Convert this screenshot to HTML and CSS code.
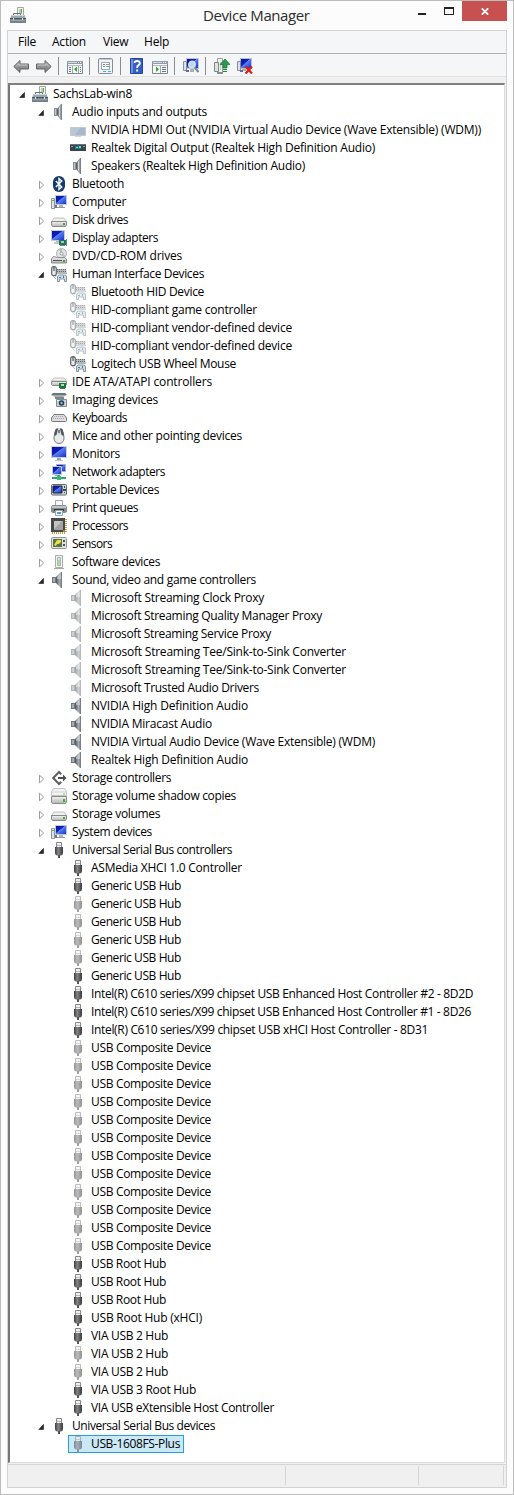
FILE: index.html
```html
<!DOCTYPE html>
<html lang="en">
<head>
<meta charset="utf-8">
<title>Device Manager</title>
<link rel="stylesheet" href="styles.css">
</head>
<body>
<svg class="sprite" aria-hidden="true">
  <defs>
    <linearGradient id="gBlue" x1="0" y1="0" x2="1" y2="1"><stop offset="0" stop-color="#0a1496"/><stop offset=".42" stop-color="#0d1fc4"/><stop offset=".46" stop-color="#5b82ee"/><stop offset="1" stop-color="#1029cf"/></linearGradient>
    <linearGradient id="gCone" x1="0" y1="0" x2="1" y2="0"><stop offset="0" stop-color="#4e5459"/><stop offset=".6" stop-color="#a9afb4"/><stop offset="1" stop-color="#6b7278"/></linearGradient>
    <linearGradient id="gBox" x1="0" y1="0" x2="0" y2="1"><stop offset="0" stop-color="#f4f4f4"/><stop offset="1" stop-color="#b4b4b4"/></linearGradient>
    <linearGradient id="gPlug" x1="0" y1="0" x2="1" y2="0"><stop offset="0" stop-color="#3c3c3e"/><stop offset=".4" stop-color="#85858a"/><stop offset="1" stop-color="#3a3a3c"/></linearGradient>
    <linearGradient id="gArrow" x1="0" y1="0" x2="0" y2="1"><stop offset="0" stop-color="#b4b4b4"/><stop offset="1" stop-color="#757575"/></linearGradient>
  </defs>
  <symbol id="open" viewBox="0 0 8 18"><path d="M5.500 7.500v5H.8z" fill="#2a2a2a" stroke="#2a2a2a" stroke-width=".7"/></symbol>
  <symbol id="closed" viewBox="0 0 8 18"><path d="M1.500 6.200v7.600l4.200-3.800z" fill="#fff" stroke="#9c9c9c"/></symbol>

  <symbol id="toolbox" viewBox="0 0 16 16"><path d="M7.500.5h6v8h-6z" fill="#f3f5f4" stroke="#a1a8a6"/><path d="M9 2h3v5H9z" fill="#b9cfb3"/><path d="M11 2h1v4h-1z" fill="#48b636"/><path d="M3.500 8V6.500h7V8" fill="none" stroke="#66717a"/><path d="M1.500 8h13l1 3H.5z" fill="#9ba7af"/><path d="M2 8h12v1H2z" fill="#cfd6da"/><path d="M0 11h16v5H0z" fill="#77838b"/><path d="M0 11h16v1H0z" fill="#4b565e"/><path d="M1 13h14v1H1z" fill="#98a4aa"/><path d="M3 11h1v2H3zM12 11h1v2h-1z" fill="#dce2e5"/></symbol>
  <symbol id="speaker" viewBox="0 0 16 16"><path d="M1 5h4v6H1z" fill="#72787d"/><path d="M2 6h2v4H2z" fill="#a7adb2"/><path d="M5 5l5-5h1v16h-1l-5-5z" fill="url(#gCone)"/><path d="M6 5l4-4v6H6z" fill="#dfe3e6" opacity=".55"/></symbol>
  <symbol id="speaker2" viewBox="0 0 16 16"><path d="M3 4h3v8H3z" fill="#8b9196"/><path d="M4 5h1v6H4z" fill="#c4c9cd"/><path d="M6 5l4-5h1v16h-1l-4-5z" fill="url(#gCone)"/><path d="M8 4l1-1v10l-1-1z" fill="#d5d9dc"/></symbol>
  <symbol id="screen" viewBox="0 0 16 16"><path d="M.5 5.500h15v8H.5z" fill="#a9b8cb" stroke="#c3c8ce"/><path d="M1 6h9l-5 7H1z" fill="#b9c6d6"/><path d="M5 14h6v1H5z" fill="#d5d8db"/></symbol>
  <symbol id="receiver" viewBox="0 0 16 16"><path d="M0 4h16v7H0z" fill="#3c4449"/><path d="M0 4h16v1H0z" fill="#6a7479"/><path d="M5 6h6v3H5z" fill="#1d7f8b"/><path d="M6 7h2v1H6zM9 6h2v2H9z" fill="#5ce0e4"/><path d="M1 6h2v1H1zM13 6h2v1h-2z" fill="#9ba5a9"/></symbol>
  <symbol id="bluetooth" viewBox="0 0 16 16"><rect x="2" width="12" height="16" rx="6" fill="#123a6c"/><path d="M4.800 5l6 6L8 13.500v-11L10.800 5l-6 6" fill="none" stroke="#fff" stroke-width="1.400"/></symbol>
  <symbol id="computer" viewBox="0 0 16 16"><path d="M4.500 1.500h11v9h-11z" fill="url(#gBlue)" stroke="#c5c8cd"/><path d="M8 11h4v2H8z" fill="#b1b5b8"/><path d="M6 13h8v1H6z" fill="#91979b"/><path d="M.5 4.500h3v10h-3z" fill="#dfe2e6" stroke="#8d949d"/><path d="M1 6h2v1H1z" fill="#53b548"/><path d="M4 11h2v3H4z" fill="#6f7396"/></symbol>
  <symbol id="disk" viewBox="0 0 16 16"><path d="M3 6h10l2.500 3.500H.5z" fill="#f0f0f0" stroke="#b3b3b3" stroke-width=".8"/><path d="M.5 9.500h15V13l-1 1.500h-13L.5 13z" fill="url(#gBox)" stroke="#898989"/><path d="M12 11h2v2h-2z" fill="#34b52c"/></symbol>
  <symbol id="display" viewBox="0 0 16 16"><path d="M.5.5h13v10H.5z" fill="url(#gBlue)" stroke="#c9ccd0"/><path d="M5 11h4v1H5z" fill="#b0b4b7"/><path d="M3 12h6v2H3z" fill="#c4c7c9"/><path d="M8 10h7v5H8z" fill="#16795a"/><path d="M10 11h3v2h-3z" fill="#b7c4bd"/><path d="M9 15h5v1H9zM15 9h1v7h-1z" fill="#7b8682"/></symbol>
  <symbol id="dvd" viewBox="0 0 16 16"><circle cx="10.500" cy="5.500" r="5" fill="#e2e4e5" stroke="#acafb1"/><path d="M10.500 5.500L8 1.500q2-1 3 0z" fill="#9bc79b"/><path d="M10.500 5.500l4 2-2 2.500z" fill="#c9b7cf"/><circle cx="10.500" cy="5.500" r="1.500" fill="#fff" stroke="#999"/><path d="M2.500 8.500L.5 11v4h15v-4l-2-1.500h-7z" fill="url(#gBox)" stroke="#8b8b8b"/><path d="M2 12h9v1H2z" fill="#555"/><path d="M12 12h2v2h-2z" fill="#33aa31"/></symbol>
  <symbol id="hid" viewBox="0 0 16 16"><rect x=".7" y=".7" width="4.600" height="9" rx="2" fill="#eceeef" stroke="#5d6469" stroke-width="1.200"/><path d="M2.500 1h1v4h-1z" fill="#31383c"/><path d="M2 10l3 3" stroke="#b4b8ba"/><path d="M6 3h9l1 5H6z" fill="#b2b7ba"/><path d="M6 3.500h9M6 5.500h10" stroke="#60676c" stroke-dasharray="1 1"/><path d="M6.500 15.500V11q0-2 2-2h5q2 0 2 2v4.500h-2V13h-5v2.500z" fill="#cfe0e7" stroke="#707c83" stroke-width=".8"/><path d="M8 11h2v1H8zM12 10h1v2h-1z" fill="#397ca8"/></symbol>
  <symbol id="ide" viewBox="0 0 16 16"><path d="M3 4h10l2.500 3H.5z" fill="#f0f0f0" stroke="#b3b3b3" stroke-width=".8"/><path d="M.5 7.500h15v3l-1 1h-13l-1-1z" fill="url(#gBox)" stroke="#898989"/><path d="M8 9h7v5H8z" fill="#167a3b"/><path d="M10 10h3v2h-3z" fill="#bad3b9"/><path d="M9 14h5v1H9z" fill="#54695a"/></symbol>
  <symbol id="imaging" viewBox="0 0 16 16"><path d="M2 1h12l2 2H0z" fill="#69757b"/><path d="M0 3h16l-4 2H4z" fill="#a3adb1"/><path d="M4 5h9v2H4z" fill="#7b868d"/><path d="M5.500 7.500h10v7h-10z" fill="#cfd3d6" stroke="#828b91"/><circle cx="10.500" cy="11" r="2.800" fill="#263d57"/><circle cx="10.500" cy="11" r="1.200" fill="#82bed8"/><path d="M6 8h2v1H6z" fill="#fff"/></symbol>
  <symbol id="keyboard" viewBox="0 0 16 16"><path d="M3 4.500h10l2.500 3.500v2.500q0 1-1 1h-13q-1 0-1-1V8z" fill="#dedee2" stroke="#77777d"/><path d="M3 6.500h10M2 8.500h12" stroke="#a2a2a9" stroke-dasharray="1 1"/></symbol>
  <symbol id="mouse" viewBox="0 0 16 16"><path d="M5 1Q3 6 3 10q0 5 5 5.500 5-.5 5-5.500 0-4-2-9-3-1-6 0z" fill="#e8eaeb" stroke="#727a80"/><path d="M5 1q-2 4-1.500 7l2-1L7 1zM11 1q2 4 1.500 7l-2-1L9 1z" fill="#4d565d"/><path d="M7 0h2v7H7z" fill="#d3d7d9"/><path d="M7.500 2h1v3h-1z" fill="#242b30"/></symbol>
  <symbol id="monitor" viewBox="0 0 16 16"><path d="M.5.5h15v11H.5z" fill="url(#gBlue)" stroke="#cfd1d3"/><path d="M6 12h4v2H6z" fill="#9fa4a8"/><path d="M4 14h8v1H4z" fill="#bdc1c4"/></symbol>
  <symbol id="network" viewBox="0 0 16 16"><path d="M5.500.5h9v7h-9z" fill="url(#gBlue)" stroke="#a6afbd"/><path d="M1.500 2.500h9v8h-9z" fill="url(#gBlue)" stroke="#c3c8cf"/><path d="M4 11h5v1H4z" fill="#9ba1a8"/><path d="M7 11h2v2H7zM1 13h14v2H1z" fill="#31a66a"/><path d="M6 12h4v4H6z" fill="#35bb79"/></symbol>
  <symbol id="portable" viewBox="0 0 16 16"><rect x=".5" y="2.500" width="15" height="10.500" rx="1" fill="#d3d6d9" stroke="#62686e"/><path d="M2 4h9v7H2z" fill="url(#gBlue)" stroke="#1b2229"/><path d="M13 4h1v2h-1zM12 7h3v2h-3zM13 10h1v1h-1z" fill="#414950"/></symbol>
  <symbol id="printer" viewBox="0 0 16 16"><path d="M4.500.5h7v6h-7z" fill="#f6f7f8" stroke="#a3a9ad"/><path d="M1.500 5h13L16 7v5l-2 1H2l-2-1V7z" fill="#858c91"/><path d="M1 6h14v2H1z" fill="#c0c5c8"/><path d="M3 9h10v2H3z" fill="#343b40"/><path d="M4.500 10.500h7v5h-7z" fill="#fff" stroke="#9ba4ac"/><path d="M6 12h4v2H6z" fill="#4a9bd1"/></symbol>
  <symbol id="cpu" viewBox="0 0 16 16"><path d="M1 15h13M15 1v13" stroke="#c19a4c" stroke-width="2" stroke-dasharray="1 1"/><path d="M0 0h14v14H0z" fill="#484848"/><path d="M3 3h9v9H3z" fill="#a2a2a2"/><path d="M3 3h8l-8 8z" fill="#c5c5c5"/><path d="M12 12h2v2h-2z" fill="#a67f3c"/></symbol>
  <symbol id="sensor" viewBox="0 0 16 16"><rect x=".5" y="1.500" width="15" height="11" rx="1" fill="#dfe1e1" stroke="#92979a"/><path d="M2 3h9v8H2z" fill="#5d7149"/><path d="M3 9l3-5h4v2L8 8H6l-1 2z" fill="#e8e23f"/><path d="M12 4h2v2h-2zM12 8h2v2h-2z" fill="#4c555b"/></symbol>
  <symbol id="software" viewBox="0 0 16 16"><path d="M4.500 1.500h7v12h-7z" fill="#f4f5f4" stroke="#a9adab"/><path d="M6.500 3.500h3v8h-3z" fill="#dfe8dc" stroke="#acb5a9"/><path d="M7.500 6h1v5h-1z" fill="#82c777"/><path d="M3 14h10v1H3z" fill="#a4a9a7"/></symbol>
  <symbol id="storage" viewBox="0 0 16 16"><path d="M8 .5L.800 8 8 15.500l3-3L9.500 11 8 12.500 3.700 8 8 3.500 9.500 5 11 3.500z" fill="#5f5f5f"/><path d="M7 7h5V4.500L15.500 8 12 11.500V9H7z" fill="#4e4e4e"/></symbol>
  <symbol id="shadow" viewBox="0 0 16 16"><path d="M2.500.5h11l2 3v4H.5v-4z" fill="#f2f2f2" stroke="#c3c3c3"/><path d="M1 4h14" stroke="#d5d5d5"/><path d="M12 5h2v2h-2z" fill="#b9d8b5"/><path d="M.5 8.500h15V14l-1 1.500h-13L.5 14z" fill="url(#gBox)" stroke="#8b8b8b"/><path d="M12 11h2v3h-2z" fill="#34b52c"/></symbol>
  <symbol id="usb" viewBox="0 0 16 16"><path d="M5.500.5h5v5h-5z" fill="#f0f0f2" stroke="#85858a"/><path d="M6 3h4v1H6z" fill="#b5b5ba"/><path d="M4 5h8v6q0 2-2 2.500H6Q4 13 4 11z" fill="url(#gPlug)"/><path d="M7 13h2v3H7z" fill="#555558"/></symbol>

  <symbol id="back" viewBox="0 0 16 16"><path d="M.800 8.500L7 2.500V6h8.500v5H7v3.500z" fill="url(#gArrow)" stroke="#646464"/><path d="M3 8.500l3-3V7h8.500" fill="none" stroke="#d4d4d4" stroke-width=".8"/></symbol>
  <symbol id="panel" viewBox="0 0 16 16"><path d="M.5 3.500h15v12H.5z" fill="#f5f6f7" stroke="#7f8790"/><path d="M0 3h16v3H0z" fill="#929cab"/><path d="M1 4h9v1H1z" fill="#d6dce5"/><path d="M11 4h1v1h-1zM13 4h1v1h-1z" fill="#fff"/><path d="M1 7.500h14" stroke="#b5bac1"/></symbol>
  <symbol id="tree-panel" viewBox="0 0 16 16"><use href="#panel"/><path d="M5.500 8v7M11.500 8v7" stroke="#a0a5ab"/><path d="M2 9.500h2M2 11.500h2M2 13.500h2M13 9.500h1M13 11.500h1M13 13.500h1" stroke="#65758b"/><path d="M10 8.500v5.500L7 11.200z" fill="#35a629"/></symbol>
  <symbol id="action-panel" viewBox="0 0 16 16"><use href="#panel"/><path d="M8.500 8v7" stroke="#a0a5ab"/><path d="M10 9.500h4M10 11.500h4M10 13.500h4" stroke="#65758b"/><path d="M4 8.500v5.500l3-2.800z" fill="#35a629"/></symbol>
  <symbol id="properties" viewBox="0 0 16 16"><rect x=".5" y=".5" width="14" height="15" rx="1" fill="#f3f4f5" stroke="#878d93"/><path d="M1 1h13v1H1z" fill="#c5cbd1"/><path d="M3.500 4.500h8v7h-8z" fill="#fff" stroke="#9ba4b0"/><path d="M5 6h2v1H5zM5 8h2v1H5z" fill="#449bd2"/><path d="M8 6h3v1H8zM8 8h3v1H8z" fill="#8d99a8"/><path d="M5 13h3v1H5zM10 13h3v1h-3z" fill="#36b4d9"/></symbol>
  <symbol id="help" viewBox="0 0 16 16"><path d="M1.500.5h12v15h-12z" fill="#365dc4" stroke="#2345a2"/><path d="M2 1h2v14H2z" fill="#6f91df"/><path d="M5.500 5q0-2 2.500-2 2.800 0 2.800 2.200 0 1.400-1.500 2.200-1.200.7-1.200 2.600M8.100 11.500v2" fill="none" stroke="#fff" stroke-width="1.800"/></symbol>
  <symbol id="scan" viewBox="0 0 16 16"><path d="M3.500.5h12v10h-12z" fill="url(#gBlue)" stroke="#c4c8ce"/><path d="M7 11h4v3H7z" fill="#a9afb4"/><path d="M.5 3.500h3v9h-3z" fill="#dde0e4" stroke="#858d97"/><path d="M3 12h3v2H3z" fill="#656995"/><circle cx="9" cy="6.500" r="3.300" fill="#bdd9ef" stroke="#dfe4e7" stroke-width="1.200"/><path d="M11.500 9.500l4 4.500" stroke="#82888c" stroke-width="2"/></symbol>
  <symbol id="update" viewBox="0 0 16 16"><path d="M3.500.5h5v14h-5z" fill="#f0f1f0" stroke="#989e9a"/><path d="M.5 4.500h4v9h-4z" fill="#dfe4df" stroke="#7e8781"/><path d="M3 14h6v2H3z" fill="#80918b"/><path d="M6.500 4v8" stroke="#c1cdbf"/><path d="M11 1l5 5.500h-3V10H9V6.500H6z" fill="#2c9b51" stroke="#176d38" stroke-width=".7"/><path d="M9 11h4v1H9zM9 13h4v1H9z" fill="#218b44"/></symbol>
  <symbol id="remove" viewBox="0 0 16 16"><path d="M3.500.5h11v10h-11z" fill="url(#gBlue)" stroke="#b9bec6"/><path d="M5 11h4v2H5z" fill="#a9afb4"/><path d="M.5 3.500h3v9h-3z" fill="#dde0e4" stroke="#858d97"/><path d="M3 12h3v2H3z" fill="#656995"/><path d="M8.500 8.500l6.500 7M15 8.500l-6.500 7" stroke="#df1b14" stroke-width="2.200"/></symbol>
</svg>

<div class="window">
  <header class="titlebar">
    <svg class="icon"><use href="#toolbox"/></svg>
    <h1 class="title">Device Manager</h1>
    <div class="controls">
      <span class="minimize"></span>
      <span class="maximize"></span>
      <span class="close"><svg viewBox="0 0 8 7"><path d="M.8.300l6.400 6.400M7.200.300L.8 6.700" stroke="#fff" stroke-width="1.700"/></svg></span>
    </div>
  </header>
  <main class="client">
    <nav class="menu"><span class="m-file">File</span><span class="m-action">Action</span><span class="m-view">View</span><span class="m-help">Help</span></nav>
    <div class="toolbar">
      <svg class="icon"><use href="#back"/></svg>
      <svg class="icon next flip"><use href="#back"/></svg>
      <i class="sep"></i>
      <svg class="icon"><use href="#tree-panel"/></svg>
      <i class="sep"></i>
      <svg class="icon"><use href="#properties"/></svg>
      <i class="sep"></i>
      <svg class="icon"><use href="#help"/></svg>
      <svg class="icon next"><use href="#action-panel"/></svg>
      <i class="sep"></i>
      <svg class="icon"><use href="#scan"/></svg>
      <i class="sep"></i>
      <svg class="icon"><use href="#update"/></svg>
      <svg class="icon next"><use href="#remove"/></svg>
    </div>
    <ul class="tree" id="tree"></ul>
    <footer class="status"><span class="pane wide"></span><span class="pane mid"></span><span class="pane end"></span></footer>
  </main>
</div>
<script src="tree.js"></script>
</body>
</html>
```
FILE: styles.css
```css
* { box-sizing: border-box; }
body { margin: 0; font: 12px/18px "Open Sans", "Noto Sans", sans-serif; letter-spacing: -.22px; color: #000; }
.sprite { position: absolute; width: 0; height: 0; }
.window { width: 514px; height: 1495px; padding: 0 6px 6px; background: #fcfcfc; border: 1px solid #bdbdbd; display: flex; flex-direction: column; }
.icon { width: 16px; height: 16px; flex: none; display: block; }

.titlebar { height: 29px; display: flex; align-items: flex-start; padding-left: 3px; }
.titlebar .icon { margin-top: 6px; }
.title { margin: 3px 0 0; flex: 1; padding-left: 177px; font-size: 15px; line-height: 22px; font-weight: 400; letter-spacing: -.4px; color: #2c2c2c; white-space: nowrap; }
.controls { display: flex; height: 20px; }
.minimize { width: 8px; height: 2px; margin: 12px 18px 0 0; background: #222; }
.maximize { width: 10px; height: 8px; margin: 6px 8px 0 0; border: 1px solid #222; border-top-width: 2px; }
.close { width: 45px; height: 20px; background: #c75050; display: grid; place-items: center; }
.close svg { width: 8px; height: 7px; }

.client { flex: 1; display: flex; flex-direction: column; border: 1px solid #d2d2d2; background: #f0f0f0; }
.menu { height: 23px; flex: none; display: flex; padding-left: 10px; line-height: 22px; background: #f5f6f7; border-bottom: 1px solid #aeb1b4; }
.m-file { width: 34px; }
.m-action { width: 51px; }
.m-view { width: 41px; }
.toolbar { height: 23px; flex: none; display: flex; align-items: flex-start; padding: 4px 0 0 5px; background: #f5f6f7; border-bottom: 1px solid #e3e3e3; }
.next { margin-left: 7px; }
.flip { transform: scaleX(-1); }
.sep { width: 1px; height: 18px; margin: -1px 8px 0 6px; background: #8d8d8d; }

.tree { flex: 1; margin: 6px 1px 1px 0; padding: 0; list-style: none; background: #fff; border: 1px solid #dcdcdc; border-top: 2px solid #808080; border-left: 2px solid #777; }
.row { display: flex; height: 18px; }
.level-0 { padding-left: 9px; }
.level-1 { padding-left: 28px; }
.level-2 { padding-left: 47px; }
.arrow { width: 8px; height: 18px; margin-right: 3px; flex: none; }
.item { display: flex; align-items: center; gap: 5px; height: 18px; padding: 0 3px 0 1px; border: 1px solid transparent; white-space: nowrap; line-height: 16px; }
.selected { background: #cbe8f6; border-color: #26a0da; }
.faded .icon { opacity: .55; }

.status { height: 23px; flex: none; display: flex; padding: 1px 2px 2px 0; border-top: 1px solid #d5d5d5; }
.pane { border-right: 1px solid #d5d5d5; }
.wide { width: 278px; }
.mid { width: 133px; }
.end { flex: 1; }
```
FILE: tree.js
```js
// Each entry: [level, icon, label, label width in px, state].
// State is open, closed, faded or selected.
const rows = [
  [0, "toolbox", "SachsLab-win8", 79, "open"],
  [1, "speaker2", "Audio inputs and outputs", 135, "open"],
  [2, "screen", "NVIDIA HDMI Out (NVIDIA Virtual Audio Device (Wave Extensible) (WDM))", 390],
  [2, "receiver", "Realtek Digital Output (Realtek High Definition Audio)", 284],
  [2, "speaker2", "Speakers (Realtek High Definition Audio)", 214],
  [1, "bluetooth", "Bluetooth", 52, "closed"],
  [1, "computer", "Computer", 54, "closed"],
  [1, "disk", "Disk drives", 56, "closed"],
  [1, "display", "Display adapters", 86, "closed"],
  [1, "dvd", "DVD/CD-ROM drives", 110, "closed"],
  [1, "hid", "Human Interface Devices", 132, "open"],
  [2, "hid", "Bluetooth HID Device", 113, "faded"],
  [2, "hid", "HID-compliant game controller", 166, "faded"],
  [2, "hid", "HID-compliant vendor-defined device", 201, "faded"],
  [2, "hid", "HID-compliant vendor-defined device", 201, "faded"],
  [2, "hid", "Logitech USB Wheel Mouse", 145],
  [1, "ide", "IDE ATA/ATAPI controllers", 140, "closed"],
  [1, "imaging", "Imaging devices", 86, "closed"],
  [1, "keyboard", "Keyboards", 55, "closed"],
  [1, "mouse", "Mice and other pointing devices", 170, "closed"],
  [1, "monitor", "Monitors", 48, "closed"],
  [1, "network", "Network adapters", 93, "closed"],
  [1, "portable", "Portable Devices", 87, "closed"],
  [1, "printer", "Print queues", 66, "closed"],
  [1, "cpu", "Processors", 56, "closed"],
  [1, "sensor", "Sensors", 40, "closed"],
  [1, "software", "Software devices", 88, "closed"],
  [1, "speaker", "Sound, video and game controllers", 184, "open"],
  [2, "speaker", "Microsoft Streaming Clock Proxy", 173, "faded"],
  [2, "speaker", "Microsoft Streaming Quality Manager Proxy", 231, "faded"],
  [2, "speaker", "Microsoft Streaming Service Proxy", 180, "faded"],
  [2, "speaker", "Microsoft Streaming Tee/Sink-to-Sink Converter", 255, "faded"],
  [2, "speaker", "Microsoft Streaming Tee/Sink-to-Sink Converter", 255, "faded"],
  [2, "speaker", "Microsoft Trusted Audio Drivers", 168, "faded"],
  [2, "speaker", "NVIDIA High Definition Audio", 157],
  [2, "speaker", "NVIDIA Miracast Audio", 121],
  [2, "speaker", "NVIDIA Virtual Audio Device (Wave Extensible) (WDM)", 284],
  [2, "speaker", "Realtek High Definition Audio", 157],
  [1, "storage", "Storage controllers", 99, "closed"],
  [1, "shadow", "Storage volume shadow copies", 164, "closed"],
  [1, "disk", "Storage volumes", 88, "closed"],
  [1, "computer", "System devices", 80, "closed"],
  [1, "usb", "Universal Serial Bus controllers", 160, "open"],
  [2, "usb", "ASMedia XHCI 1.0 Controller", 151],
  [2, "usb", "Generic USB Hub", 90],
  [2, "usb", "Generic USB Hub", 90, "faded"],
  [2, "usb", "Generic USB Hub", 90, "faded"],
  [2, "usb", "Generic USB Hub", 90, "faded"],
  [2, "usb", "Generic USB Hub", 90, "faded"],
  [2, "usb", "Generic USB Hub", 90],
  [2, "usb", "Intel(R) C610 series/X99 chipset USB Enhanced Host Controller #2 - 8D2D", 382],
  [2, "usb", "Intel(R) C610 series/X99 chipset USB Enhanced Host Controller #1 - 8D26", 380],
  [2, "usb", "Intel(R) C610 series/X99 chipset USB xHCI Host Controller - 8D31", 337],
  ...Array.from({ length: 12 }, () => [2, "usb", "USB Composite Device", 120, "faded"]),
  [2, "usb", "USB Root Hub", 75],
  [2, "usb", "USB Root Hub", 75],
  [2, "usb", "USB Root Hub", 75],
  [2, "usb", "USB Root Hub (xHCI)", 111],
  [2, "usb", "VIA USB 2 Hub", 77],
  [2, "usb", "VIA USB 2 Hub", 77, "faded"],
  [2, "usb", "VIA USB 2 Hub", 77, "faded"],
  [2, "usb", "VIA USB 3 Root Hub", 105],
  [2, "usb", "VIA USB eXtensible Host Controller", 183],
  [1, "usb", "Universal Serial Bus devices", 143, "open"],
  [2, "usb", "USB-1608FS-Plus", 89, "selected"],
];

const tree = document.getElementById("tree");
tree.innerHTML = rows.map(([level, icon, label, width, state = ""]) => {
  const arrow = state === "open" || state === "closed" ? `<use href="#${state}"/>` : "";
  const selected = state === "selected" ? "selected" : "";
  const faded = state === "faded" || selected ? "faded" : "";
  return `<li class="row level-${level} ${faded}"><svg class="arrow">${arrow}</svg>` +
    `<span class="item ${selected}"><svg class="icon"><use href="#${icon}"/></svg><span class="label">${label}</span></span></li>`;
}).join("");

// Adjust the tracking so that each label takes up its listed width.
tree.querySelectorAll(".label").forEach((label, i) => {
  label.style.letterSpacing = "0px";
  const natural = label.getBoundingClientRect().width;
  label.style.letterSpacing = (rows[i][3] - natural) / rows[i][2].length + "px";
});
```
